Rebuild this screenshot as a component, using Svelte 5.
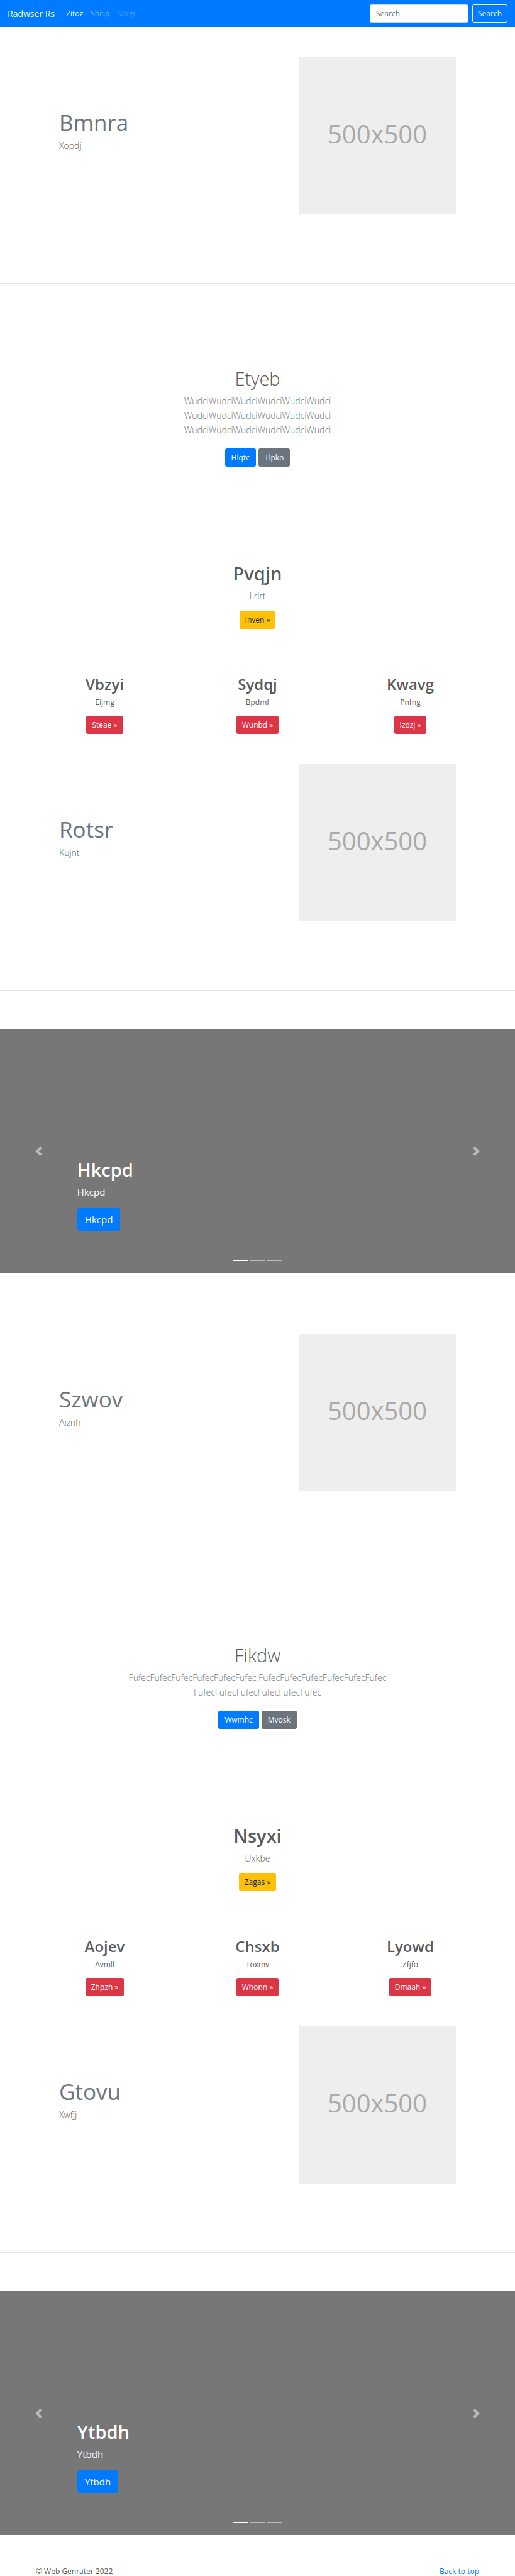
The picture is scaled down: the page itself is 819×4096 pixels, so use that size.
<script>
  const blocks = [
    {
      top: { title: 'Bmnra', text: 'Xopdj' },
      intro: {
        title: 'Etyeb',
        text: 'WudciWudciWudciWudciWudciWudci WudciWudciWudciWudciWudciWudci WudciWudciWudciWudciWudciWudci',
        primary: 'Hlqtc',
        secondary: 'Tlpkn'
      },
      promo: { title: 'Pvqjn', text: 'Lrlrt', action: 'Inven »' },
      columns: [
        { title: 'Vbzyi', text: 'Eijmg', action: 'Steae »' },
        { title: 'Sydqj', text: 'Bpdmf', action: 'Wunbd »' },
        { title: 'Kwavg', text: 'Pnfng', action: 'Izozj »' }
      ],
      bottom: { title: 'Rotsr', text: 'Kujnt' },
      slide: 'Hkcpd'
    },
    {
      top: { title: 'Szwov', text: 'Aiznh' },
      intro: {
        title: 'Fikdw',
        text: 'FufecFufecFufecFufecFufecFufec FufecFufecFufecFufecFufecFufec FufecFufecFufecFufecFufecFufec',
        primary: 'Wwmhc',
        secondary: 'Mvosk'
      },
      promo: { title: 'Nsyxi', text: 'Uxkbe', action: 'Zagas »' },
      columns: [
        { title: 'Aojev', text: 'Avmll', action: 'Zhpzh »' },
        { title: 'Chsxb', text: 'Toxmv', action: 'Whonn »' },
        { title: 'Lyowd', text: 'Zfjfo', action: 'Dmaah »' }
      ],
      bottom: { title: 'Gtovu', text: 'Xwfjj' },
      slide: 'Ytbdh'
    }
  ];
</script>

{#snippet featurette(item)}
  <section class="featurette">
    <div class="featurette-copy">
      <h2>{item.title}</h2>
      <p class="lead">{item.text}</p>
    </div>
    <div class="placeholder">500x500</div>
  </section>
  <hr />
{/snippet}

<header id="top">
  <nav class="navbar">
    <a class="brand" href="#top">Radwser Rs</a>
    <ul class="links">
      <li><a class="active" href="#top">Zitoz</a></li>
      <li><a href="#top">Shcip</a></li>
      <li><a class="disabled" href="#top" aria-disabled="true">Sazgi</a></li>
    </ul>
    <form class="search" onsubmit={(e) => e.preventDefault()}>
      <input type="search" placeholder="Search" aria-label="Search" />
      <button class="btn outline" type="submit">Search</button>
    </form>
  </nav>
</header>

<main>
  {#each blocks as block}
    {@render featurette(block.top)}

    <section class="intro">
      <h1>{block.intro.title}</h1>
      <p class="lead muted">{block.intro.text}</p>
      <div class="actions">
        <a class="btn primary" href="#top">{block.intro.primary}</a>
        <a class="btn secondary" href="#top">{block.intro.secondary}</a>
      </div>
    </section>

    <section class="promo">
      <h1>{block.promo.title}</h1>
      <p class="lead">{block.promo.text}</p>
      <a class="btn warning" href="#top">{block.promo.action}</a>
    </section>

    <section class="columns">
      {#each block.columns as column}
        <div class="column">
          <h2>{column.title}</h2>
          <p>{column.text}</p>
          <a class="btn danger" href="#top">{column.action}</a>
        </div>
      {/each}
    </section>

    {@render featurette(block.bottom)}

    <section class="carousel" aria-label={block.slide}>
      <div class="caption">
        <h1>{block.slide}</h1>
        <p>{block.slide}</p>
        <a class="btn primary large" href="#top">{block.slide}</a>
      </div>
      <button class="control prev" type="button" aria-label="Previous">
        <svg viewBox="0 0 8 8" aria-hidden="true"><path d="M5.25 0l-4 4 4 4 1.5-1.5-2.5-2.5 2.5-2.5-1.5-1.5z" /></svg>
      </button>
      <button class="control next" type="button" aria-label="Next">
        <svg viewBox="0 0 8 8" aria-hidden="true"><path d="M2.75 0l-1.5 1.5 2.5 2.5-2.5 2.5 1.5 1.5 4-4-4-4z" /></svg>
      </button>
      <div class="indicators">
        <span class="current"></span>
        <span></span>
        <span></span>
      </div>
    </section>
  {/each}
</main>

<footer>
  <p>© Web Genrater 2022</p>
  <a href="#top">Back to top</a>
</footer>

<style>
  :global(body) {
    margin: 0;
    background: #fff;
    color: #5a5a5a;
    font-family: 'Segoe UI', 'Open Sans', 'Noto Sans', sans-serif;
    font-size: 12px;
    line-height: 18px;
  }

  h1,
  h2,
  p,
  ul {
    margin: 0;
    padding: 0;
  }

  h1 {
    margin-bottom: 6px;
    font-size: 29px;
    line-height: 36px;
    font-weight: 600;
  }

  a {
    color: #007bff;
    text-decoration: none;
  }

  .lead {
    font-size: 14px;
    line-height: 23px;
    font-weight: 300;
  }

  .muted {
    color: #6c757d;
  }

  .btn {
    display: inline-block;
    box-sizing: border-box;
    padding: 5px 9px;
    border: 1px solid transparent;
    border-radius: 3px;
    font-family: inherit;
    font-size: 12px;
    line-height: 17px;
    color: #fff;
  }

  .primary {
    background: #007bff;
  }

  .secondary {
    background: #6c757d;
  }

  .warning {
    background: #ffc107;
    color: #212529;
  }

  .danger {
    padding: 5px 8px;
    background: #dc3545;
  }

  .outline {
    padding: 5px 8px;
    border-color: #f8f9fa;
    background: transparent;
    color: #f8f9fa;
  }

  .warning {
    padding: 5px 8px;
  }

  .large {
    padding: 6px 11px;
    border-radius: 4px;
    font-size: 15px;
    line-height: 22px;
  }

  .navbar {
    display: flex;
    align-items: center;
    padding: 7px 12px;
    background: #007bff;
  }

  .brand {
    margin-right: 12px;
    font-size: 14px;
    line-height: 23px;
    color: #fff;
  }

  .links {
    display: flex;
    flex: 1;
    list-style: none;
  }

  .links a {
    display: block;
    padding: 0 6px;
    color: rgba(255, 255, 255, 0.5);
  }

  .links a.active {
    color: #fff;
  }

  .links a.disabled {
    color: rgba(255, 255, 255, 0.25);
  }

  .search {
    display: flex;
    gap: 6px;
  }

  .search input {
    box-sizing: border-box;
    width: 157px;
    height: 29px;
    padding: 4px 9px;
    border: 1px solid #ced4da;
    border-radius: 3px;
    background: #fff;
    font: inherit;
    color: #495057;
    appearance: none;
  }

  .search input::placeholder {
    color: #6c757d;
    opacity: 1;
  }

  .featurette {
    display: flex;
    justify-content: space-between;
    padding: 48px 94px 109px;
  }

  .featurette-copy {
    padding-top: 85px;
  }

  .featurette h2 {
    margin-bottom: 6px;
    font-size: 35px;
    line-height: 38px;
    font-weight: 400;
    color: #6c757d;
  }

  .placeholder {
    display: flex;
    align-items: center;
    justify-content: center;
    box-sizing: border-box;
    width: 250px;
    height: 250px;
    padding-bottom: 6px;
    background: #eee;
    color: #aaa;
    font-size: 40px;
    line-height: 48px;
  }

  hr {
    height: 1px;
    margin: 0;
    border: 0;
    background: rgba(0, 0, 0, 0.1);
  }

  .intro {
    max-width: 450px;
    margin: 0 auto;
    padding: 133px 24px 152px;
    text-align: center;
  }

  .intro h1 {
    font-weight: 300;
  }

  .actions {
    display: flex;
    justify-content: center;
    gap: 4px;
    margin-top: 18px;
  }

  .promo {
    padding-bottom: 73px;
    text-align: center;
  }

  .promo .btn,
  .column .btn {
    display: block;
    width: fit-content;
    margin: 12px auto 0;
  }

  .columns {
    display: grid;
    grid-template-columns: repeat(3, 1fr);
    padding: 0 45px;
    text-align: center;
  }

  .column h2 {
    margin-bottom: 6px;
    font-size: 24px;
    line-height: 29px;
    font-weight: 600;
  }

  .carousel {
    position: relative;
    display: flex;
    align-items: flex-end;
    box-sizing: border-box;
    min-height: 388px;
    margin: 61px 0 49px;
    padding: 0 15% 67px;
    background: #777;
    color: #fff;
  }

  .caption p {
    margin-bottom: 14px;
    font-size: 15px;
    line-height: 23px;
  }

  .caption .btn {
    display: block;
    width: fit-content;
  }

  .control {
    position: absolute;
    top: 0;
    bottom: 0;
    display: flex;
    align-items: center;
    justify-content: center;
    width: 15%;
    padding: 0;
    border: 0;
    background: transparent;
    opacity: 0.5;
  }

  .control svg {
    width: 15px;
    height: 15px;
    fill: #fff;
  }

  .prev {
    left: 0;
  }

  .next {
    right: 0;
  }

  .indicators {
    position: absolute;
    right: 0;
    bottom: 19px;
    left: 0;
    display: flex;
    justify-content: center;
    gap: 4px;
  }

  .indicators span {
    width: 23px;
    height: 2px;
    background: rgba(255, 255, 255, 0.5);
  }

  .indicators .current {
    background: #fff;
  }

  footer {
    display: flex;
    justify-content: space-between;
    padding: 0 57px;
    line-height: 17px;
  }
</style>
